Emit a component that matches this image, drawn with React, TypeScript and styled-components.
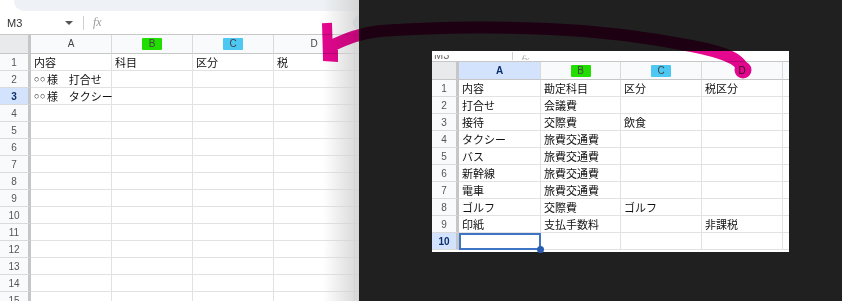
import React from "react";
import styled, { createGlobalStyle } from "styled-components";

const GlobalStyle = createGlobalStyle`
    html, body {
        margin: 0;
        padding: 0;
        background: #202020;
    }
    body {
        width: 842px;
        height: 301px;
        overflow: hidden;
        font-family: "Liberation Sans", Arial, sans-serif;
    }
`;

type Mark = "green" | "cyan" | "none";

interface Column {
    label: string;
    width: number;
    mark?: Mark;
    active?: boolean;
}

interface SheetProps {
    rowHeaderWidth: number;
    columns: Column[];
    filler: number;
    headerHeight: number;
    rows: React.ReactNode[][];
    rowCount: number;
    activeRow?: number;
    selected?: { row: number; col: number };
}

const MARK_COLORS: Record<Mark, string> = {
    green: "#22dd00",
    cyan: "#4cc8f2",
    none: "transparent",
};

const Sheet: React.FC<SheetProps> = ({
    rowHeaderWidth,
    columns,
    filler,
    headerHeight,
    rows,
    rowCount,
    activeRow,
    selected,
}) => {
    const template = [rowHeaderWidth, ...columns.map((c) => c.width), filler].map((w) => `${w}px`).join(" ");

    return (
        <Style.Grid $template={template} $header={headerHeight}>
            <Style.Corner />
            {columns.map((c) => (
                <Style.ColHeader key={c.label} $active={c.active}>
                    <Style.Mark $color={MARK_COLORS[c.mark || "none"]}>{c.label}</Style.Mark>
                </Style.ColHeader>
            ))}
            <Style.Filler $header />

            {Array.from({ length: rowCount }).map((_, r) => (
                <React.Fragment key={r}>
                    <Style.RowHeader $active={activeRow === r + 1}>{r + 1}</Style.RowHeader>
                    {columns.map((c, ci) => {
                        const isSel = selected && selected.row === r + 1 && selected.col === ci;
                        return (
                            <Style.Cell key={c.label} $selected={!!isSel}>
                                {rows[r]?.[ci] || ""}
                                {isSel && <Style.Handle />}
                            </Style.Cell>
                        );
                    })}
                    <Style.Filler />
                </React.Fragment>
            ))}
        </Style.Grid>
    );
};

const Placeholder = () => <Style.Small>○○</Style.Small>;

const leftRows: React.ReactNode[][] = [
    ["内容", "科目", "区分", "税"],
    [
        <>
            <Placeholder />様　打合せ
        </>,
    ],
    [
        <>
            <Placeholder />様　タクシー
        </>,
    ],
];

const rightRows = [
    ["内容", "勘定科目", "区分", "税区分"],
    ["打合せ", "会議費"],
    ["接待", "交際費", "飲食"],
    ["タクシー", "旅費交通費"],
    ["バス", "旅費交通費"],
    ["新幹線", "旅費交通費"],
    ["電車", "旅費交通費"],
    ["ゴルフ", "交際費", "ゴルフ"],
    ["印紙", "支払手数料", "", "非課税"],
];

const App: React.FC = () => {
    return (
        <Style.Page>
            <GlobalStyle />
            <Style.LeftPane>
                <Style.TopBand />
                <Style.FormulaBar>
                    <Style.NameBox>
                        M3
                        <Style.Caret />
                    </Style.NameBox>
                    <Style.Divider />
                    <Style.Fx>fx</Style.Fx>
                    <Style.Avatar />
                </Style.FormulaBar>
                <Sheet
                    rowHeaderWidth={31}
                    columns={[
                        { label: "A", width: 81 },
                        { label: "B", width: 81, mark: "green" },
                        { label: "C", width: 81, mark: "cyan" },
                        { label: "D", width: 81 },
                    ]}
                    filler={4}
                    headerHeight={19}
                    rows={leftRows}
                    rowCount={15}
                    activeRow={3}
                />
            </Style.LeftPane>

            <Style.RightPane>
                <Style.Panel>
                    <Style.PanelStrip>
                        <Style.StripName>M3</Style.StripName>
                        <Style.StripDivider />
                        <Style.StripFx>fx</Style.StripFx>
                    </Style.PanelStrip>
                    <Sheet
                        rowHeaderWidth={27}
                        columns={[
                            { label: "A", width: 82, active: true },
                            { label: "B", width: 80, mark: "green" },
                            { label: "C", width: 81, mark: "cyan" },
                            { label: "D", width: 81 },
                        ]}
                        filler={6}
                        headerHeight={18}
                        rows={rightRows}
                        rowCount={10}
                        activeRow={10}
                        selected={{ row: 10, col: 0 }}
                    />
                </Style.Panel>
            </Style.RightPane>

            {/* hand-drawn marker arrow */}
            <Style.Arrow width="842" height="301" viewBox="0 0 842 301">
                <path
                    d="M743 70 C741 58, 722 52, 692 46 C645 37, 600 31, 550 29 C480 26, 420 28, 380 31 C360 33, 346 39, 331 46"
                    fill="none"
                    stroke="#e6078f"
                    strokeWidth="12"
                    strokeLinecap="round"
                />
                <circle cx="743" cy="70" r="8.5" fill="#e6078f" />
                <path d="M327 23 L328 58" stroke="#e6078f" strokeWidth="10" fill="none" />
                <path d="M323 48 L338 50 L338 62 L323 61 Z" fill="#e6078f" />
            </Style.Arrow>
        </Style.Page>
    );
};

export default App;

const Style = {
    Page: styled.div`
        position: relative;
        display: flex;
        width: 842px;
        height: 301px;
        background: #202020;
        overflow: hidden;
        isolation: isolate;
    `,

    LeftPane: styled.div`
        position: relative;
        width: 359px;
        height: 301px;
        background: #ffffff;
        overflow: hidden;
        flex-shrink: 0;

        &::after {
            content: "";
            position: absolute;
            top: 0;
            right: 0;
            width: 36px;
            height: 100%;
            background: linear-gradient(to right, rgba(225, 225, 225, 0), rgba(210, 210, 210, 0.9));
            pointer-events: none;
        }
    `,

    TopBand: styled.div`
        height: 11px;
        margin-left: 14px;
        background: #eef1f5;
        border-bottom-left-radius: 10px;
    `,

    FormulaBar: styled.div`
        display: flex;
        align-items: center;
        height: 24px;
        border-bottom: 1px solid #c7c7c7;
        box-sizing: border-box;
        font-size: 11px;
        color: #333;
    `,

    NameBox: styled.div`
        display: flex;
        align-items: center;
        justify-content: space-between;
        width: 66px;
        padding-left: 7px;
    `,

    Caret: styled.span`
        width: 0;
        height: 0;
        border-left: 4px solid transparent;
        border-right: 4px solid transparent;
        border-top: 4px solid #555;
    `,

    Divider: styled.span`
        width: 1px;
        height: 14px;
        margin-left: 10px;
        background: #d0d0d0;
    `,

    Fx: styled.span`
        margin-left: 9px;
        font-family: "Liberation Serif", serif;
        font-style: italic;
        font-size: 12px;
        color: #9a9a9a;
    `,

    Avatar: styled.span`
        margin-left: auto;
        margin-right: -10px;
        width: 16px;
        height: 16px;
        border-radius: 50%;
        background: #c9dbf1;
    `,

    Grid: styled.div<{ $template: string; $header: number }>`
        display: grid;
        grid-template-columns: ${(p) => p.$template};
        grid-template-rows: ${(p) => p.$header}px;
        grid-auto-rows: 17px;
        font-family: "Noto Sans CJK JP", "Liberation Sans", sans-serif;
        font-size: 11px;
        color: #111;
    `,

    Corner: styled.div`
        background: #e9eaec;
        border-right: 3px solid #c4c7c5;
        border-bottom: 1px solid #c4c7c5;
        box-sizing: border-box;
    `,

    ColHeader: styled.div<{ $active?: boolean }>`
        display: flex;
        align-items: center;
        justify-content: center;
        background: ${(p) => (p.$active ? "#d3e3fd" : "#f9fafb")};
        border-right: 1px solid #dadada;
        border-bottom: 1px solid #c4c7c5;
        box-sizing: border-box;
        font-family: "Liberation Sans", Arial, sans-serif;
        font-size: 10px;
        font-weight: ${(p) => (p.$active ? 700 : 400)};
        color: ${(p) => (p.$active ? "#0b2f6b" : "#444")};
    `,

    Mark: styled.span<{ $color: string }>`
        display: inline-block;
        min-width: 10px;
        padding: 0 5px;
        line-height: 12px;
        text-align: center;
        background: ${(p) => p.$color};
        border-radius: 1px;
    `,

    Filler: styled.div<{ $header?: boolean }>`
        background: ${(p) => (p.$header ? "#f9fafb" : "#ffffff")};
        border-bottom: 1px solid ${(p) => (p.$header ? "#c4c7c5" : "#e2e2e2")};
        box-sizing: border-box;
    `,

    RowHeader: styled.div<{ $active?: boolean }>`
        display: flex;
        align-items: center;
        justify-content: center;
        background: ${(p) => (p.$active ? "#d3e3fd" : "#f9fafb")};
        border-right: 3px solid #c4c7c5;
        border-bottom: 1px solid #dadada;
        box-sizing: border-box;
        font-family: "Liberation Sans", Arial, sans-serif;
        font-size: 10px;
        font-weight: ${(p) => (p.$active ? 700 : 400)};
        color: ${(p) => (p.$active ? "#0b2f6b" : "#555")};
    `,

    Cell: styled.div<{ $selected: boolean }>`
        position: relative;
        display: flex;
        align-items: center;
        padding-left: 3px;
        white-space: nowrap;
        overflow: visible;
        border-right: 1px solid #e2e2e2;
        border-bottom: 1px solid #e2e2e2;
        box-sizing: border-box;
        outline: ${(p) => (p.$selected ? "2px solid #3d74c4" : "none")};
        outline-offset: -2px;
        line-height: 16px;
    `,

    Small: styled.span`
        font-family: "Liberation Sans", Arial, sans-serif;
        font-size: 9px;
        letter-spacing: 0.5px;
        margin-right: 1px;
    `,

    Handle: styled.span`
        position: absolute;
        right: -4px;
        bottom: -4px;
        width: 7px;
        height: 7px;
        border-radius: 50%;
        background: #2a5db0;
        z-index: 1;
    `,

    RightPane: styled.div`
        flex: 1;
        padding: 51px 0 0 73px;
    `,

    Panel: styled.div`
        width: 357px;
        height: 201px;
        background: #ffffff;
    `,

    PanelStrip: styled.div`
        display: flex;
        align-items: flex-end;
        height: 11px;
        overflow: hidden;
        border-bottom: 1px solid #c7c7c7;
        box-sizing: border-box;
        font-size: 11px;
        color: #666;
    `,

    StripName: styled.span`
        margin: 0 0 2px 2px;
        line-height: 8px;
        height: 4px;
        overflow: hidden;
        display: flex;
        align-items: flex-end;
    `,

    StripDivider: styled.span`
        width: 1px;
        height: 8px;
        margin: 0 0 1px 63px;
        background: #d0d0d0;
    `,

    StripFx: styled.span`
        margin: 0 0 1px 8px;
        height: 5px;
        overflow: hidden;
        font-family: "Liberation Serif", serif;
        font-style: italic;
        color: #aaa;
        line-height: 8px;
    `,

    Arrow: styled.svg`
        position: absolute;
        top: 0;
        left: 0;
        pointer-events: none;
        mix-blend-mode: multiply;
    `,
};
